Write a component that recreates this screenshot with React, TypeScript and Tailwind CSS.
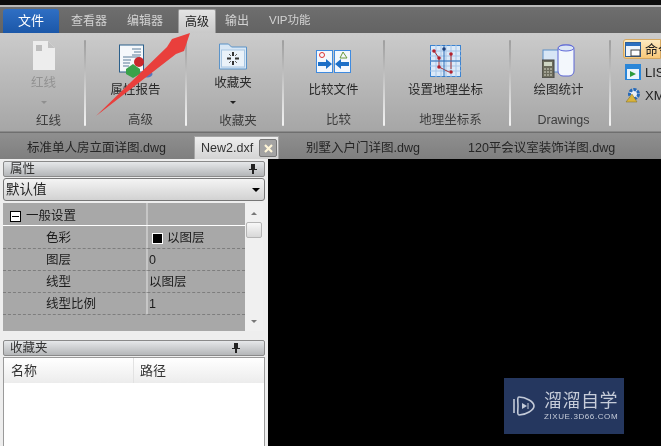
import React from "react";

const font = { fontFamily: '"Liberation Sans","Noto Sans CJK SC",sans-serif' };

function Sep() {
  return <div className="w-[2px] h-[86px] mt-[7px] rounded-full bg-gradient-to-b from-[#9e9e9e] via-[#c9c9c9] to-[#f4f4f4] shrink-0" />;
}

function Group({ w, label, title, icon, dim, compact }: { w: string; label: string; title: string; icon: React.ReactNode; dim?: boolean; compact?: boolean }) {
  return (
    <div className={`${w} shrink-0 h-full flex flex-col items-center`}>
      <div className={compact ? "h-[30px] mt-[8px] flex items-center justify-center shrink-0" : "h-[36px] mt-[10px] flex items-center justify-center shrink-0"}>{icon}</div>
      <div className={`text-[12.5px] leading-[14px] shrink-0 ${compact ? "mt-[5px]" : "mt-[4px]"} ${dim ? "text-[#929292]" : "text-[#2a2a2a]"}`}>{title}</div>
      {compact && (
        <div className="h-[24px] flex items-center justify-center shrink-0">
          <div className={`w-0 h-0 border-x-[3px] border-x-transparent border-t-[3px] ${dim ? "border-t-[#8f8f8f]" : "border-t-[#222]"}`} />
        </div>
      )}
      <div className="mt-auto mb-[4px] pl-[10px] text-[12.5px] leading-[14px] text-[#3d3d3d] whitespace-nowrap">{label}</div>
    </div>
  );
}

function DocIcon() {
  return (
    <svg width="24" height="30" viewBox="0 0 24 30">
      <path d="M1 0h15l7 7v22H1z" fill="#ededed" />
      <path d="M16 0v7h7z" fill="#c2c2c2" />
      <rect x="4" y="4" width="6" height="6" fill="#bdbdbd" />
    </svg>
  );
}
function ReportIcon() {
  return (
    <svg width="34" height="34" viewBox="0 0 34 34">
      <rect x="0.5" y="1" width="24" height="27" fill="#f5f8fb" stroke="#2b5f8a" />
      <path d="M13 5h9M15 8h7M13 11h9M4 13h17M4 16h8M4 19h7M4 22h6" stroke="#5a7d99" strokeWidth="1" />
      <ellipse cx="28" cy="30" rx="5.5" ry="3.5" fill="#5876bd" />
      <circle cx="20" cy="18" r="5" fill="#c9282c" />
      <path d="M7 25l7-5 7 5v5l-7 4-7-4z" fill="#3aa24a" />
    </svg>
  );
}
function FolderIcon() {
  return (
    <svg width="28" height="27" viewBox="0 0 28 27">
      <path d="M.5 26V1h9l3 3h15v22z" fill="#d8e7f5" stroke="#5b93c8" />
      <rect x="2.5" y="7" width="23" height="17" fill="#eaf2f9" stroke="#a8c6e2" />
      <path d="M14 9v4M14 18v4M8 15.500h4M16 15.500h4" stroke="#333" strokeWidth="2" />
      <path d="M10 11l2 2M18 11l-2 2M10 20l2-2M18 20l-2-2" stroke="#666" />
    </svg>
  );
}
function CompareIcon() {
  return (
    <svg width="35" height="23" viewBox="0 0 35 23">
      <rect x="0.5" y="0.5" width="16" height="22" fill="#f4f8fd" stroke="#3f8be0" />
      <rect x="18.500" y="0.5" width="16" height="22" fill="#f4f8fd" stroke="#3f8be0" />
      <circle cx="6" cy="5" r="2.5" fill="none" stroke="#d33" />
      <path d="M27 2l4 6h-7z" fill="none" stroke="#6a9a3a" />
      <path d="M2 12h8V9l6 5-6 5v-3H2z" fill="#1d6fc7" />
      <path d="M33 12h-8V9l-6 5 6 5v-3h8z" fill="#1d6fc7" />
    </svg>
  );
}
function GeoIcon() {
  return (
    <svg width="31" height="32" viewBox="0 0 31 32">
      <rect x="0.5" y="0.5" width="30" height="31" fill="#dbe9f8" stroke="#3c83d0" />
      <path d="M6 0v32M11 0v32M16 0v32M21 0v32M26 0v32M0 6h31M0 11h31M0 16h31M0 21h31M0 26h31" stroke="#a5c5e8" />
      <path d="M4 6l5 7 0 9 10 5M21 9v15" fill="none" stroke="#a33" />
      <path d="M14 0v32M0 16h31" stroke="#2d6fb8" />
      <circle cx="4" cy="6" r="1.8" fill="#b3202c" /><circle cx="9" cy="13" r="1.8" fill="#b3202c" />
      <circle cx="9" cy="22" r="1.8" fill="#b3202c" /><circle cx="21" cy="9" r="1.8" fill="#b3202c" />
      <circle cx="21" cy="27" r="1.8" fill="#b3202c" /><circle cx="14" cy="4" r="1.8" fill="#1d3f7a" />
    </svg>
  );
}
function StatIcon() {
  return (
    <svg width="33" height="34" viewBox="0 0 33 34">
      <rect x="1" y="6" width="18" height="22" fill="#d7e6f6" stroke="#5d8fc7" />
      <rect x="16" y="1" width="16" height="31" rx="5" fill="#f3f7fc" stroke="#5c66d6" />
      <ellipse cx="24" cy="4" rx="8" ry="3" fill="#dce6f5" stroke="#5c66d6" />
      <rect x="0" y="16" width="12" height="18" fill="#6b6b5c" stroke="#444" />
      <rect x="2" y="18" width="8" height="4" fill="#cfd6c4" />
      <path d="M2 25h8M2 28h8M2 31h8" stroke="#d8d8c8" strokeDasharray="2 1" />
    </svg>
  );
}

function SmallBtn({ active, text, icon }: { active?: boolean; text: string; icon: React.ReactNode }) {
  return (
    <div className={`h-[20px] w-full flex items-center gap-[4px] pl-[1px] rounded-l-[3px] border ${active ? "bg-gradient-to-b from-[#fdeac0] to-[#f8c878] border-[#d6a860]" : "border-transparent"}`}>
      {icon}
      <span className="text-[13px] leading-none text-[#222] whitespace-nowrap">{text}</span>
    </div>
  );
}

function Row({ name, value, swatch, left, first }: { name: string; value: string; swatch?: boolean; left: string; first?: boolean }) {
  return (
    <div className={`flex ${first ? "h-[23px]" : "h-[22px]"} border-b border-dashed border-[#7e7e7e] text-[12.5px] text-[#1c1c1c]`}>
      <div className="w-[145px] pl-[43px] pt-[2px] flex items-center border-r-[2px] border-r-[#c6c6c6]">{name}</div>
      <div className={`flex-1 flex items-center pt-[2px] ${left}`}>
        {swatch && <span className="w-[11px] h-[11px] bg-black border border-white mr-[4px] shrink-0" />}
        {value}
      </div>
    </div>
  );
}

function PaneHead({ title, pinRight }: { title: string; pinRight: string }) {
  return (
    <div className="h-[16px] mx-[3px] shrink-0 flex items-center justify-between rounded-[2px] border border-[#8a8a8a] bg-gradient-to-b from-[#e6e8ea] to-[#b4b6b8] pl-[6px] text-[12.5px] text-[#333]">
      <span className="pt-[1px]">{title}</span>
      <span className={pinRight}>
        <svg width="8" height="10" viewBox="0 0 8 10" className="block">
          <path d="M2 0h4v5h2v1H5v4H3V6H0V5h2z" fill="#222" />
        </svg>
      </span>
    </div>
  );
}

export default function App() {
  return (
    <div className="relative w-[661px] h-[446px] overflow-hidden bg-black blur-[0.5px]" style={font}>
      <div className="h-[5px] bg-[#0c0c0c]" />
      <div className="h-[2px] bg-[#b9b9b9]" />
      {/* tabs */}
      <div className="h-[26px] flex items-end bg-gradient-to-b from-[#6e6e6e] to-[#636363] pl-[3px] text-[12px] text-[#d2d2d2]">
        <div className="w-[56px] h-[24px] rounded-t-[3px] bg-gradient-to-b from-[#2f6fc4] to-[#1b57a8] text-white text-[13px] flex items-center justify-center">文件</div>
        <div className="w-[60px] h-[24px] flex items-center justify-center">查看器</div>
        <div className="w-[52px] h-[24px] flex items-center justify-center">编辑器</div>
        <div className="w-[38px] h-[24px] ml-[7px] rounded-t-[2px] bg-gradient-to-b from-[#e4e4e4] to-[#c9c9c9] border-x border-t border-[#9a9a9a] text-[#222] flex items-center justify-center">高级</div>
        <div className="w-[42px] h-[24px] flex items-center justify-center">输出</div>
        <div className="h-[24px] flex items-center ml-[11px] text-[11.5px]">VIP功能</div>
      </div>
      {/* ribbon */}
      <div className="h-[98px] flex pl-[3px] bg-gradient-to-b from-[#cbcbcb] to-[#a6a6a6] overflow-hidden">
        <Group w="w-[81px]" title="红线" label="红线" dim compact icon={<DocIcon />} />
        <Sep />
        <Group w="w-[99px]" title="属性报告" label="高级" icon={<ReportIcon />} />
        <Sep />
        <Group w="w-[95px] pr-[3px]" title="收藏夹" label="收藏夹" compact icon={<FolderIcon />} />
        <Sep />
        <Group w="w-[99px]" title="比较文件" label="比较" icon={<CompareIcon />} />
        <Sep />
        <Group w="w-[124px] pr-[3px]" title="设置地理坐标" label="地理坐标系" icon={<GeoIcon />} />
        <Sep />
        <Group w="w-[98px] pr-[3px]" title="绘图统计" label="Drawings" icon={<StatIcon />} />
        <Sep />
        <div className="flex-1 pl-[12px] pt-[6px] flex flex-col gap-[3px] min-w-[50px]">
          <SmallBtn active text="命令" icon={<svg width="16" height="15" viewBox="0 0 16 15" className="shrink-0"><rect x=".5" y=".5" width="15" height="14" fill="#eef4fb" stroke="#2b5f9c" /><path d="M1 1h14v3H1z" fill="#2b6fc0" /><rect x="6" y="8" width="9" height="6" fill="#fff" stroke="#444" /></svg>} />
          <SmallBtn text="LISP" icon={<svg width="16" height="16" viewBox="0 0 16 16" className="shrink-0"><rect width="16" height="16" fill="#2a86d8" /><rect x="2" y="5" width="12" height="10" fill="#eaf4fc" /><path d="M5 7l6 3-6 3z" fill="#2c9b3b" /></svg>} />
          <SmallBtn text="XML" icon={<svg width="16" height="16" viewBox="0 0 16 16" className="shrink-0"><circle cx="9" cy="7" r="4.500" fill="#e8eef5" stroke="#2468b8" strokeWidth="3" strokeDasharray="3 1" /><path d="M1 15l6-8 5 8z" fill="#d9b33b" stroke="#7a6a20" strokeWidth="0.5" /></svg>} />
        </div>
      </div>
      <div className="h-[1px] bg-[#8a8a8a]" />
      {/* doc tabs */}
      <div className="h-[27px] flex items-end bg-gradient-to-b from-[#8f8f8f] to-[#7f7f7f] text-[12.5px] text-[#262626] border-t border-[#6f6f6f]">
        <div className="w-[194px] h-[22px] pl-[27px] flex items-center whitespace-nowrap">标准单人房立面详图.dwg</div>
        <div className="w-[85px] h-[23px] bg-gradient-to-b from-[#eeeeee] to-[#d4d4d4] border-x border-t border-[#a5a5a5] pl-[6px] flex items-center justify-between pr-[1px]">
          <span className="text-[#333]">New2.dxf</span>
          <span className="w-[18px] h-[18px] rounded-[2px] bg-[#a3a3a3] border border-[#777] flex items-center justify-center">
            <svg width="9" height="9" viewBox="0 0 9 9"><path d="M1 1l7 7M8 1l-7 7" stroke="#fff6d8" strokeWidth="2.2" /></svg>
          </span>
        </div>
        <div className="w-[189px] h-[22px] pl-[27px] flex items-center whitespace-nowrap">别墅入户门详图.dwg</div>
        <div className="h-[22px] flex items-center whitespace-nowrap">120平会议室装饰详图.dwg</div>
      </div>
      {/* main */}
      <div className="flex h-[287px]">
        <div className="w-[268px] h-full bg-[#eeeeee] pt-[2px] shrink-0 flex flex-col">
          <PaneHead title="属性" pinRight="mr-[7px]" />
          <div className="h-[23px] mt-[1px] mx-[3px] shrink-0 rounded-[3px] border border-[#777] bg-gradient-to-b from-[#f4f4f4] to-[#d2d2d2] flex items-center justify-between pl-[2px] pr-[4px] text-[13.5px] text-[#222]">
            <span className="pt-[2px]">默认值</span>
            <span className="w-0 h-0 border-x-[4px] border-x-transparent border-t-[4px] border-t-black" />
          </div>
          <div className="h-[128px] mt-[2px] ml-[3px] flex mr-[5px] shrink-0">
            <div className="w-[242px] bg-[#a8a8a8]">
              <div className="flex h-[23px] border-b-[1px] border-white text-[12.5px] text-[#1c1c1c]">
                <div className="w-[145px] pl-[7px] pt-[4px] flex items-center border-r-[2px] border-r-[#c6c6c6]">
                  <span className="w-[11px] h-[11px] border border-black bg-white mr-[5px] flex items-center justify-center shrink-0"><span className="w-[7px] h-[1px] bg-black" /></span>
                  一般设置
                </div>
              </div>
              <Row first name="色彩" value="以图层" swatch left="pl-[4px]" />
              <Row name="图层" value="0" left="pl-[1px]" />
              <Row name="线型" value="以图层" left="pl-[1px]" />
              <Row name="线型比例" value="1" left="pl-[1px]" />
            </div>
            <div className="flex-1 bg-[#f0f0f0] flex flex-col items-center relative">
              <div className="mt-[9px] w-0 h-0 border-x-[3px] border-x-transparent border-b-[3px] border-b-[#777]" />
              <div className="mt-[7px] w-[16px] h-[16px] rounded-[2px] border border-[#b5b5b5] bg-gradient-to-b from-[#f8f8f8] to-[#d8d8d8]" />
              <div className="mt-auto mb-[8px] w-0 h-0 border-x-[3px] border-x-transparent border-t-[3px] border-t-[#777]" />
            </div>
          </div>
          <div className="h-[9px] shrink-0" />
          <PaneHead title="收藏夹" pinRight="mr-[24px]" />
          <div className="flex-1 mx-[3px] mt-[1px] bg-white border-x border-t border-[#9a9a9a]">
            <div className="h-[25px] flex items-center text-[13px] text-[#333] bg-gradient-to-b from-white to-[#ececec]">
              <div className="w-[130px] pl-[7px] h-full flex items-center border-r border-[#e2e2e2]">名称</div>
              <div className="pl-[6px]">路径</div>
            </div>
          </div>
        </div>
        <div className="flex-1 bg-black" />
      </div>

      {/* red annotation arrow */}
      <svg className="absolute left-0 top-0" width="661" height="446" viewBox="0 0 661 446">
        <path d="M96 116L167 47L172 39L190 33L184 51L176 54Z" fill="#e93f3c" />
      </svg>

      {/* watermark */}
      <div className="absolute left-[504px] top-[378px] w-[120px] h-[56px] bg-[#25375f] flex items-center pl-[8px] gap-[8px]">
        <svg width="24" height="24" viewBox="0 0 24 24" fill="none" stroke="#c3cad8" strokeWidth="1.6">
          <path d="M2 5v14" />
          <path d="M7 3c7 0 15 5 15 9s-8 9-15 9c-2 0-1-5-1-9s-1-9 1-9z" />
          <path d="M10 9l5 3-5 3z" fill="#c3cad8" stroke="none" />
          <path d="M16 9v6" strokeWidth="1" />
        </svg>
        <div className="flex flex-col text-[#c6ccd9] leading-none">
          <span className="text-[18px] tracking-[0.5px] leading-[20px] whitespace-nowrap">溜溜自学</span>
          <span className="text-[8px] tracking-[0.6px] leading-[10px] mt-[1px] whitespace-nowrap">ZIXUE.3D66.COM</span>
        </div>
      </div>
    </div>
  );
}
